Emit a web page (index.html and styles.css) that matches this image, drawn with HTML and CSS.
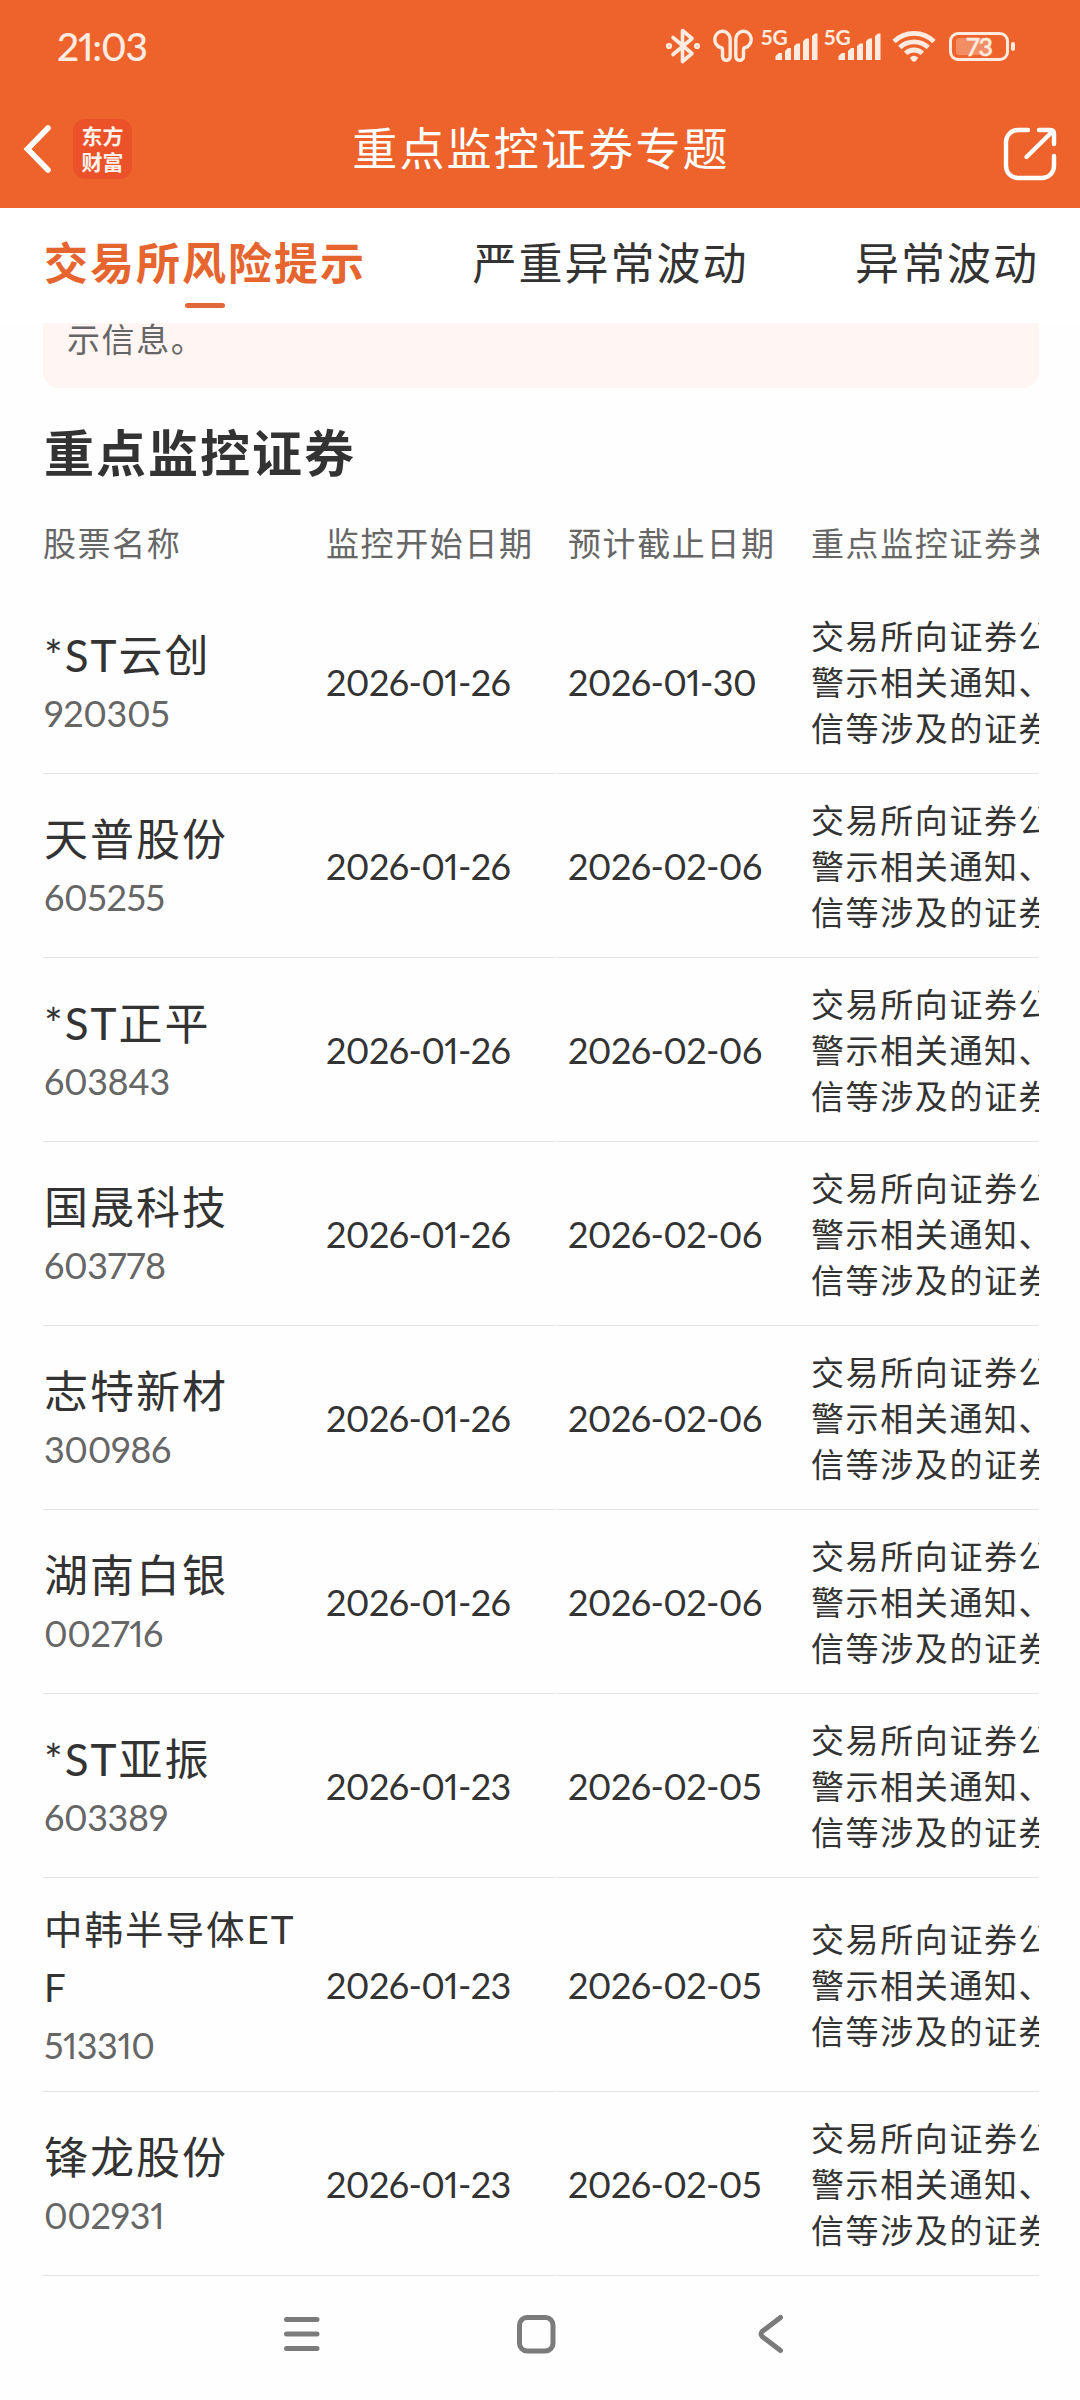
FILE: index.html
```html
<!DOCTYPE html>
<html lang="zh-CN">
<head>
    <meta charset="UTF-8">
    <meta name="viewport" content="width=device-width, initial-scale=1.0">
    <title>重点监控证券专题</title>
    <link rel="stylesheet" href="styles.css">
</head>
<body>
    <header class="header">
        <div class="status-bar">
            <span class="time">21:03</span>
            <div class="status-icons">
                <svg class="icon-bt" width="36" height="38" viewBox="0 0 36 38" fill="none" stroke="currentColor" stroke-width="3.6" stroke-linejoin="round" stroke-linecap="round">
                    <path d="M8 10.500 L27 26.500 L17.500 34.500 V3.500 L27 11.500 L8 27.500"/>
                    <circle cx="4" cy="19" r="1.300"/>
                    <circle cx="32" cy="19" r="1.300"/>
                </svg>
                <svg class="icon-buds" width="40" height="34" viewBox="0 0 40 34" fill="none" stroke="currentColor" stroke-width="3.4" stroke-linejoin="round">
                    <path d="M17.200 11 A7.700 8.300 0 1 0 7.500 18.500 C9 18.600 9.500 19.500 9.500 21 V27.500 A3.800 3.800 0 0 0 17.200 27.500 Z"/>
                    <path d="M22.800 11 A7.700 8.300 0 1 1 32.500 18.500 C31 18.600 30.500 19.500 30.500 21 V27.500 A3.800 3.800 0 0 1 22.800 27.500 Z"/>
                </svg>
                <div class="signal">
                    <span class="net">5G</span>
                    <svg width="43" height="27" viewBox="0 0 43 27" fill="currentColor">
                        <path d="M0.500 27 V23 L4 20 H7 V27 Z M10 27 V18 L13 15 H16 V27 Z M19 27 V13 L22 10.500 H25 V27 Z M28 27 V8 L31 5.500 H34 V27 Z M37 27 V3 L40 0.500 H42.500 V27 Z"/>
                    </svg>
                </div>
                <div class="signal">
                    <span class="net">5G</span>
                    <svg width="43" height="27" viewBox="0 0 43 27" fill="currentColor">
                        <path d="M0.500 27 V23 L4 20 H7 V27 Z M10 27 V18 L13 15 H16 V27 Z M19 27 V13 L22 10.500 H25 V27 Z M28 27 V8 L31 5.500 H34 V27 Z M37 27 V3 L40 0.500 H42.500 V27 Z"/>
                    </svg>
                </div>
                <svg class="icon-wifi" width="44" height="33" viewBox="0 0 44 33" fill="none" stroke="currentColor" stroke-width="4.800">
                    <path d="M2 11.500 A28.500 28.500 0 0 1 42 11.500"/>
                    <path d="M7.800 17.500 A20.500 20.500 0 0 1 36.200 17.500"/>
                    <path d="M13.600 23.300 A12.300 12.300 0 0 1 30.400 23.300"/>
                    <path d="M18 27.500 Q22 24 26 27.500 Q24.500 31.500 22 31.800 Q19.500 31.500 18 27.500 Z" fill="currentColor" stroke="none"/>
                </svg>
                <div class="battery">
                    <div class="battery-level"></div>
                    <span class="battery-num">73</span>
                </div>
                <div class="battery-cap"></div>
            </div>
        </div>
        <div class="nav">
            <div class="nav-left">
                <svg width="30" height="50" viewBox="0 0 30 50" fill="none" stroke="#fff" stroke-width="5.600" stroke-linecap="round" stroke-linejoin="miter">
                    <path d="M25 4 L4.500 25 L25 46"/>
                </svg>
                <div class="logo">东方<br>财富</div>
            </div>
            <h1 class="nav-title">重点监控证券专题</h1>
            <svg class="icon-share" width="54" height="54" viewBox="0 0 54 54" fill="none" stroke="#fff" stroke-width="4.400" stroke-linecap="round" stroke-linejoin="round">
                <path d="M25 3 H15 A12 12 0 0 0 3 15 V39 A12 12 0 0 0 15 51 H39 A12 12 0 0 0 51 39 V29"/>
                <path d="M36 3 H47 Q51 3 51 7 V17"/>
                <path d="M23.500 30 L49 5"/>
            </svg>
        </div>
    </header>

    <nav class="tabs">
        <a class="tab active">交易所风险提示</a>
        <a class="tab">严重异常波动</a>
        <a class="tab">异常波动</a>
    </nav>

    <main class="content">
        <div class="notice"><p>示信息。</p></div>

        <h2 class="section-title">重点监控证券</h2>

        <div class="table">
            <div class="row row-head">
                <div class="cell">股票名称</div>
                <div class="cell">监控开始日期</div>
                <div class="cell cell-end">预计截止日期</div>
                <div class="cell">重点监控证券类</div>
            </div>
            <div class="row">
                <div class="cell cell-stock"><span class="name">*ST云创</span><span class="code">920305</span></div>
                <div class="cell date">2026-01-26</div>
                <div class="cell cell-end date">2026-01-30</div>
                <div class="cell desc">交易所向证券公<br>警示相关通知、<br>信等涉及的证券</div>
            </div>
            <div class="row">
                <div class="cell cell-stock"><span class="name">天普股份</span><span class="code">605255</span></div>
                <div class="cell date">2026-01-26</div>
                <div class="cell cell-end date">2026-02-06</div>
                <div class="cell desc">交易所向证券公<br>警示相关通知、<br>信等涉及的证券</div>
            </div>
            <div class="row">
                <div class="cell cell-stock"><span class="name">*ST正平</span><span class="code">603843</span></div>
                <div class="cell date">2026-01-26</div>
                <div class="cell cell-end date">2026-02-06</div>
                <div class="cell desc">交易所向证券公<br>警示相关通知、<br>信等涉及的证券</div>
            </div>
            <div class="row">
                <div class="cell cell-stock"><span class="name">国晟科技</span><span class="code">603778</span></div>
                <div class="cell date">2026-01-26</div>
                <div class="cell cell-end date">2026-02-06</div>
                <div class="cell desc">交易所向证券公<br>警示相关通知、<br>信等涉及的证券</div>
            </div>
            <div class="row">
                <div class="cell cell-stock"><span class="name">志特新材</span><span class="code">300986</span></div>
                <div class="cell date">2026-01-26</div>
                <div class="cell cell-end date">2026-02-06</div>
                <div class="cell desc">交易所向证券公<br>警示相关通知、<br>信等涉及的证券</div>
            </div>
            <div class="row">
                <div class="cell cell-stock"><span class="name">湖南白银</span><span class="code">002716</span></div>
                <div class="cell date">2026-01-26</div>
                <div class="cell cell-end date">2026-02-06</div>
                <div class="cell desc">交易所向证券公<br>警示相关通知、<br>信等涉及的证券</div>
            </div>
            <div class="row">
                <div class="cell cell-stock"><span class="name">*ST亚振</span><span class="code">603389</span></div>
                <div class="cell date">2026-01-23</div>
                <div class="cell cell-end date">2026-02-05</div>
                <div class="cell desc">交易所向证券公<br>警示相关通知、<br>信等涉及的证券</div>
            </div>
            <div class="row row-tall">
                <div class="cell cell-stock"><span class="name name-long">中韩半导体ETF</span><span class="code">513310</span></div>
                <div class="cell date">2026-01-23</div>
                <div class="cell cell-end date">2026-02-05</div>
                <div class="cell desc">交易所向证券公<br>警示相关通知、<br>信等涉及的证券</div>
            </div>
            <div class="row">
                <div class="cell cell-stock"><span class="name">锋龙股份</span><span class="code">002931</span></div>
                <div class="cell date">2026-01-23</div>
                <div class="cell cell-end date">2026-02-05</div>
                <div class="cell desc">交易所向证券公<br>警示相关通知、<br>信等涉及的证券</div>
            </div>
        </div>
    </main>

    <footer class="system-nav">
        <svg width="40" height="40" viewBox="0 0 40 40" fill="none" stroke="currentColor" stroke-width="5" stroke-linecap="round">
            <path d="M4.500 5.500 H35 M4.500 20 H35 M4.500 34.500 H35"/>
        </svg>
        <svg width="40" height="40" viewBox="0 0 40 40" fill="none" stroke="currentColor" stroke-width="5">
            <rect x="3.500" y="3.500" width="33.500" height="33.500" rx="7.500"/>
        </svg>
        <svg width="40" height="40" viewBox="0 0 40 40" fill="none" stroke="currentColor" stroke-width="5" stroke-linecap="round">
            <path d="M30.500 3.500 L12.500 17.200 Q9.500 20 12.500 22.800 L30.500 36.500"/>
        </svg>
    </footer>
</body>
</html>
```
FILE: styles.css
```css
* {
    box-sizing: border-box;
}

body {
    display: flex;
    flex-direction: column;
    width: 1080px;
    height: 2400px;
    margin: 0;
    overflow: hidden;
    background: #fefefe;
    color: #333;
    font-family: Lato, "Noto Sans CJK SC", sans-serif;
    font-variant-numeric: proportional-nums;
}

svg {
    display: block;
    flex: none;
}

h1, h2, p {
    margin: 0;
}

/* 顶部 */
.header {
    height: 208px;
    background: #ed632b;
    color: #fff;
}

.status-bar {
    display: flex;
    justify-content: space-between;
    height: 92px;
    padding: 0 65px 0 57px;
    color: #ffebe0;
}

.time {
    font-size: 39px;
    font-weight: 500;
    letter-spacing: -1.2px;
    line-height: 92px;
}

.status-icons {
    display: flex;
    align-items: center;
}

.icon-bt {
    margin-right: 12px;
}

.icon-buds {
    margin-right: 8px;
}

.signal {
    position: relative;
    width: 57px;
    height: 30px;
    margin-right: 6px;
    padding: 3px 0 0 14px;
    margin-top: -2px;
}

.net {
    position: absolute;
    left: 0;
    top: -3px;
    font-size: 21px;
    font-weight: bold;
    line-height: 20px;
}

.icon-wifi {
    margin: 0 13px 0 5px;
}

.battery {
    position: relative;
    display: flex;
    align-items: center;
    justify-content: center;
    width: 60px;
    height: 29px;
    border: 3px solid currentColor;
    border-radius: 9px;
}

.battery-level {
    position: absolute;
    left: 4px;
    top: 3px;
    width: 35px;
    height: 17px;
    border-radius: 3px;
    background: #f38e64;
}

.battery-num {
    position: relative;
    font-size: 25px;
    font-weight: 500;
    letter-spacing: -1px;
    line-height: 23px;
    -webkit-text-stroke: 0.5px currentColor;
}

.battery-cap {
    width: 4px;
    height: 9px;
    margin-left: 2px;
    border-radius: 2px;
    background: currentColor;
}

.nav {
    display: grid;
    grid-template-columns: 1fr auto 1fr;
    align-items: center;
    height: 114px;
    padding: 0 23px;
}

.nav-left {
    display: flex;
    align-items: center;
    gap: 20px;
}

.logo {
    width: 59px;
    height: 60px;
    padding-top: 4px;
    border-radius: 12px;
    background: #eb5229;
    color: #fff3ec;
    font-size: 21px;
    font-weight: bold;
    line-height: 26px;
    text-align: center;
}

.nav-title {
    padding-left: 2px;
    font-size: 45px;
    font-weight: 400;
    letter-spacing: 2.2px;
    line-height: 60px;
}

.icon-share {
    justify-self: end;
    margin-top: 10px;
}

/* 标签栏 */
.tabs {
    display: flex;
    justify-content: space-between;
    height: 115px;
    padding: 0 41px 0 44px;
    background: #fff;
}

.tab {
    position: relative;
    font-size: 44px;
    letter-spacing: 2px;
    line-height: 110px;
}

.tab.active {
    color: #e6652f;
    font-weight: bold;
}

.tab.active::after {
    content: "";
    position: absolute;
    left: 50%;
    top: 95px;
    width: 40px;
    height: 5px;
    margin-left: -20px;
    border-radius: 3px;
    background: #e2673a;
}

/* 内容 */
.content {
    width: 996px;
    margin-left: 43px;
}

.notice {
    height: 65px;
    padding-left: 24px;
    border-radius: 0 0 16px 16px;
    background: #fff5f2;
    color: #666;
    overflow: hidden;
}

.notice p {
    font-size: 33px;
    letter-spacing: 1.6px;
    line-height: 32px;
}

.section-title {
    padding: 30px 0 0 1px;
    font-size: 50px;
    letter-spacing: 2px;
    line-height: 70px;
}

.table {
    overflow: hidden;
}

.row {
    display: grid;
    grid-template-columns: 283px 230px 255px 240px;
    height: 184px;
}

.row-tall {
    height: 214px;
}

.row-head {
    height: 102px;
    color: #666;
    font-size: 33px;
    letter-spacing: 1.6px;
}

.cell {
    display: flex;
    align-items: center;
    border-bottom: 1px solid #e4e4e4;
    white-space: nowrap;
}

.row-head .cell {
    padding-top: 5px;
    border-bottom: none;
}

/* 左侧固定列与右侧滚动列之间留 1px */
.cell-end {
    margin-left: 1px;
    padding-left: 11px;
}

.cell-stock {
    flex-direction: column;
    align-items: flex-start;
    justify-content: center;
    padding-top: 5px;
}

.name {
    padding-left: 1px;
    font-size: 44px;
    letter-spacing: 2px;
    line-height: 58px;
}

.name-long {
    width: 255px;
    font-size: 38.5px;
    white-space: normal;
    word-break: break-all;
}

.code {
    padding-left: 1px;
    color: #666;
    font-size: 36px;
    letter-spacing: -0.4px;
    line-height: 58px;
}

.date {
    font-size: 36px;
    letter-spacing: -0.6px;
}

.desc {
    font-size: 33px;
    letter-spacing: 1.6px;
    line-height: 46px;
}

/* 系统导航键 */
.system-nav {
    display: flex;
    justify-content: center;
    gap: 194px;
    padding: 38px 9px 0 0;
    color: #7b7b7b;
}
```
